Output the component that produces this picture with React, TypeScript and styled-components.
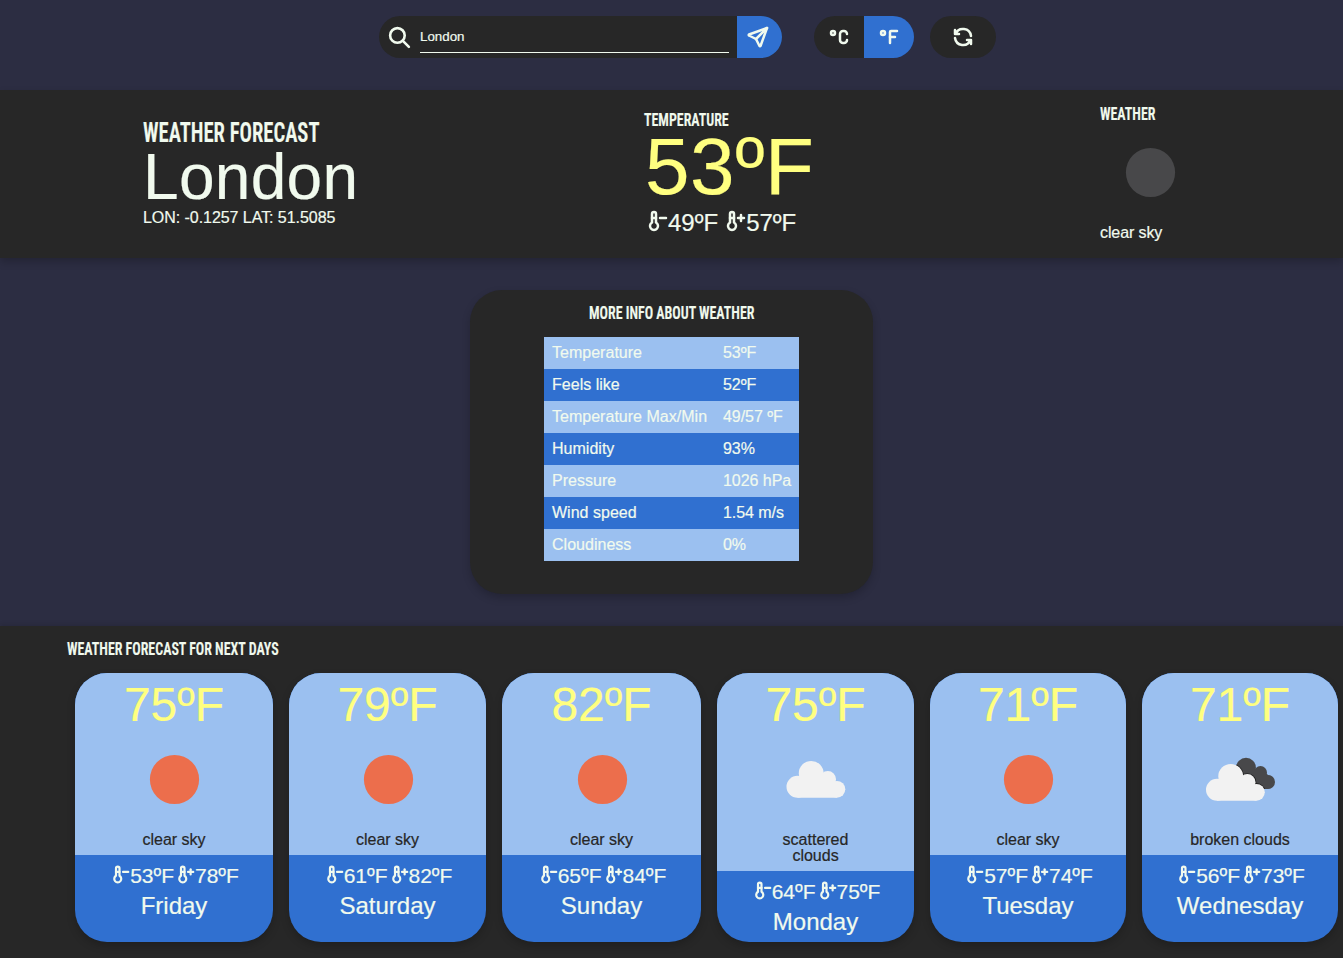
import React from "react";
import styled, { createGlobalStyle } from "styled-components";
import {
  TbRefresh,
  TbSearch,
  TbSend,
  TbTemperatureCelsius,
  TbTemperatureFahrenheit,
  TbTemperatureMinus,
  TbTemperaturePlus,
} from "react-icons/tb";

const color = {
  page: "#2c2d42",
  panel: "#272727",
  text: "#f1faee",
  blue: "#3070d0",
  sky: "#9bc0f0",
  yellow: "#ffff80",
};

const Global = createGlobalStyle`
  *, *::before, *::after { box-sizing: border-box; }
  body {
    margin: 0;
    overflow: hidden;
    background: ${color.page};
    color: ${color.text};
    font: 16px/1 "Liberation Sans", Arial, sans-serif;
    -webkit-text-stroke: 0.2px;
  }
  h1, h2, h3, p { margin: 0; font-weight: 400; }
`;

const Page = styled.div`
  display: flex;
  flex-direction: column;
  height: 958px;
`;

const Toolbar = styled.header`
  display: flex;
  flex: none;
  align-items: flex-start;
  height: 90px;
  padding: 16px 0 0 379px;

  svg { stroke-width: 2.5; }
`;

const SearchForm = styled.form`
  display: flex;
  width: 403px;
  height: 42px;
  margin-right: 32px;
  border-radius: 21px;
  overflow: hidden;
  background: ${color.panel};
`;

const SearchLabel = styled.label`
  display: flex;
  align-items: center;
  padding: 0 8px;
  font-size: 25px;
`;

const SearchInput = styled.input`
  flex: 1;
  min-width: 0;
  height: 32px;
  margin: 5px 8px 0 0;
  padding: 0;
  border: 0;
  border-bottom: 1px solid ${color.text};
  outline: 0;
  background: transparent;
  color: ${color.text};
  font: 13.33px "Liberation Sans", Arial, sans-serif;
`;

const IconButton = styled.button<{ $width: number; $active?: boolean }>`
  display: flex;
  align-items: center;
  justify-content: center;
  width: ${(p) => p.$width}px;
  height: 42px;
  padding: 0;
  border: 0;
  background: ${(p) => (p.$active ? color.blue : color.panel)};
  color: ${color.text};
  font-size: 24px;
`;

const SendButton = styled(IconButton)`
  padding-right: 4px;
`;

const Units = styled.div`
  display: flex;
  margin-right: 16px;
  border-radius: 21px;
  overflow: hidden;
`;

const RefreshButton = styled(IconButton)`
  border-radius: 21px;
`;

const Heading = styled.h2<{ $size?: number; $centered?: boolean }>`
  width: max-content;
  font-family: "Roboto Condensed", Roboto, sans-serif;
  font-weight: 600;
  font-size: ${(p) => p.$size ?? 18}px;
  line-height: 16px;
  white-space: nowrap;
  transform: scaleX(0.775);
  transform-origin: ${(p) => (p.$centered ? "center" : "left")};
`;

const CityHeading = styled(Heading)`
  line-height: 24px;
  transform: scaleX(0.764);
`;

const Current = styled.section`
  display: flex;
  flex: none;
  align-items: center;
  justify-content: space-around;
  height: 168px;
  background: ${color.panel};
  box-shadow: 0 4px 8px rgba(0, 0, 0, 0.2);
`;

const Block = styled.div<{ $width: number }>`
  width: ${(p) => p.$width}px;
  white-space: nowrap;
`;

const TemperatureBlock = styled(Block)`
  padding: 0 0 1px 1px;
`;

const SkyBlock = styled(Block)`
  padding-bottom: 1px;
`;

const City = styled.h1`
  font-size: 64px;
  line-height: 64px;
  letter-spacing: 0.3px;
`;

const Coordinates = styled.p`
  padding-top: 1px;
  margin-bottom: 1px;
  letter-spacing: -0.05px;
`;

const Temperature = styled.p`
  padding: 0 0 6px 1px;
  color: ${color.yellow};
  font-size: 80px;
  line-height: 77px;
  letter-spacing: 0.6px;
`;

const Range = styled.p<{ $size: number; $gap: number }>`
  display: flex;
  align-items: center;
  gap: ${(p) => p.$gap}px;
  font-size: ${(p) => p.$size}px;
  line-height: 24px;
`;

const RangeItem = styled.span`
  display: flex;
  align-items: center;

  svg {
    margin-top: -4px;
    stroke-width: 2.5;
  }
`;

const Middle = styled.main`
  display: flex;
  flex: none;
  justify-content: center;
  height: 368px;
  padding: 32px 0;
`;

const InfoCard = styled.section`
  display: flex;
  flex-direction: column;
  align-items: center;
  gap: 16px;
  width: 403px;
  padding-top: 15px;
  border-radius: 32px;
  background: ${color.panel};
  box-shadow: 0 4px 8px rgba(0, 0, 0, 0.2);
`;

const InfoTable = styled.dl`
  width: 255px;
  margin: 0;
`;

const InfoRow = styled.div`
  display: grid;
  grid-template-columns: 171px 1fr;
  align-items: center;
  height: 32px;
  padding-left: 8px;
  background: ${color.sky};
  white-space: nowrap;

  &:nth-child(even) { background: ${color.blue}; }
  dt, dd { margin: 0; }
  dt { letter-spacing: 0.02px; }
  dd { letter-spacing: -0.05px; }
`;

const Forecast = styled.section`
  flex: 1;
  padding: 15px 0 16px 67px;
  background: ${color.panel};
  box-shadow: 0 -2px 4px rgba(0, 0, 0, 0.1);
`;

const Days = styled.div`
  display: flex;
  gap: 16px;
  width: max-content;
  padding: 16px 0 0 8px;
`;

const DayCard = styled.article<{ $width: number }>`
  display: flex;
  flex-direction: column;
  width: ${(p) => p.$width}px;
  height: 269px;
  border-radius: 32px;
  overflow: hidden;
  background: ${color.blue};
  box-shadow: 0 4px 8px rgba(0, 0, 0, 0.2);
`;

const DaySky = styled.div`
  display: flex;
  flex-direction: column;
  align-items: center;
  padding: 8px 0 7px;
  background: ${color.sky};
`;

const DayTemperature = styled.p`
  color: ${color.yellow};
  font-size: 48px;
  line-height: 48px;
`;

const Description = styled.p`
  width: 100px;
  padding-top: 3px;
  color: ${color.panel};
  text-align: center;
`;

const CurrentDescription = styled.p`
  padding-top: 3px;
  letter-spacing: -0.1px;
`;

const DayFooter = styled.div`
  display: flex;
  flex-direction: column;
  align-items: center;
  gap: 6px;
  padding-top: 9px;
`;

const DayName = styled.p`
  font-size: 24px;
  line-height: 24px;
`;

const Picture = styled.svg`
  display: block;
  width: 100px;
  height: 100px;
`;

type Sky = "sun" | "night" | "cloud" | "clouds";

const CloudShape = () => (
  <>
    <circle cx="31.5" cy="57.7" r="11" />
    <circle cx="45.2" cy="44.3" r="12.4" />
    <circle cx="61.8" cy="50.2" r="8.2" />
    <circle cx="70.9" cy="60.3" r="8.4" />
    <path d="M31.5 49H58l12.9 4v15.7H31.5z" />
  </>
);

const DarkCloudShape = () => (
  <>
    <circle cx="56" cy="38.7" r="9.9" />
    <circle cx="70.5" cy="43.6" r="6.5" />
    <circle cx="78" cy="53" r="7" />
    <path d="M52 40h20l6 6v14H52z" />
  </>
);

function SkyPicture({ sky }: { sky: Sky }) {
  return (
    <Picture viewBox="0 0 100 100">
      {sky === "sun" && <circle cx="50.5" cy="50.5" r="24.6" fill="#ec6e4c" />}
      {sky === "night" && <circle cx="50.5" cy="50.5" r="24.6" fill="#48484a" />}
      {sky === "cloud" && <g fill="#f2f2f2"><CloudShape /></g>}
      {sky === "clouds" && (
        <>
          <clipPath id="dark-cloud"><DarkCloudShape /></clipPath>
          <g fill="#48484a"><DarkCloudShape /></g>
          <g clipPath="url(#dark-cloud)">
            <g fill="#222" stroke="#222" strokeWidth="1.6" transform="translate(-4.5 3)"><CloudShape /></g>
          </g>
          <g fill="#f2f2f2" transform="translate(-4.5 3)"><CloudShape /></g>
        </>
      )}
    </Picture>
  );
}

function MinMax({ min, max, size, gap }: { min: number; max: number; size: number; gap: number }) {
  return (
    <Range $size={size} $gap={gap}>
      <RangeItem><TbTemperatureMinus />{min}ºF</RangeItem>
      <RangeItem><TbTemperaturePlus />{max}ºF</RangeItem>
    </Range>
  );
}

const details = [
  ["Temperature", "53ºF"],
  ["Feels like", "52ºF"],
  ["Temperature Max/Min", "49/57 ºF"],
  ["Humidity", "93%"],
  ["Pressure", "1026 hPa"],
  ["Wind speed", "1.54 m/s"],
  ["Cloudiness", "0%"],
];

const days: { name: string; temp: number; min: number; max: number; text: string; sky: Sky; width: number }[] = [
  { name: "Friday", temp: 75, min: 53, max: 78, text: "clear sky", sky: "sun", width: 198 },
  { name: "Saturday", temp: 79, min: 61, max: 82, text: "clear sky", sky: "sun", width: 197 },
  { name: "Sunday", temp: 82, min: 65, max: 84, text: "clear sky", sky: "sun", width: 199 },
  { name: "Monday", temp: 75, min: 64, max: 75, text: "scattered clouds", sky: "cloud", width: 197 },
  { name: "Tuesday", temp: 71, min: 57, max: 74, text: "clear sky", sky: "sun", width: 196 },
  { name: "Wednesday", temp: 71, min: 56, max: 73, text: "broken clouds", sky: "clouds", width: 196 },
];

export default function App() {
  return (
    <Page>
      <Global />
      <Toolbar>
        <SearchForm>
          <SearchLabel htmlFor="city"><TbSearch /></SearchLabel>
          <SearchInput id="city" defaultValue="London" />
          <SendButton type="button" $width={45} $active><TbSend /></SendButton>
        </SearchForm>
        <Units>
          <IconButton $width={50}><TbTemperatureCelsius /></IconButton>
          <IconButton $width={50} $active><TbTemperatureFahrenheit /></IconButton>
        </Units>
        <RefreshButton $width={66}><TbRefresh /></RefreshButton>
      </Toolbar>

      <Current>
        <Block $width={214}>
          <CityHeading $size={27}>WEATHER FORECAST</CityHeading>
          <City>London</City>
          <Coordinates>LON: -0.1257 LAT: 51.5085</Coordinates>
        </Block>
        <TemperatureBlock $width={171}>
          <Heading>TEMPERATURE</Heading>
          <Temperature>53ºF</Temperature>
          <MinMax min={49} max={57} size={24} gap={4} />
        </TemperatureBlock>
        <SkyBlock $width={100}>
          <Heading>WEATHER</Heading>
          <SkyPicture sky="night" />
          <CurrentDescription>clear sky</CurrentDescription>
        </SkyBlock>
      </Current>

      <Middle>
        <InfoCard>
          <Heading $centered>MORE INFO ABOUT WEATHER</Heading>
          <InfoTable>
            {details.map(([label, value]) => (
              <InfoRow key={label}><dt>{label}</dt><dd>{value}</dd></InfoRow>
            ))}
          </InfoTable>
        </InfoCard>
      </Middle>

      <Forecast>
        <Heading>WEATHER FORECAST FOR NEXT DAYS</Heading>
        <Days>
          {days.map((d) => (
            <DayCard key={d.name} $width={d.width}>
              <DaySky>
                <DayTemperature>{d.temp}ºF</DayTemperature>
                <SkyPicture sky={d.sky} />
                <Description>{d.text}</Description>
              </DaySky>
              <DayFooter>
                <MinMax min={d.min} max={d.max} size={21} gap={0} />
                <DayName>{d.name}</DayName>
              </DayFooter>
            </DayCard>
          ))}
        </Days>
      </Forecast>
    </Page>
  );
}
